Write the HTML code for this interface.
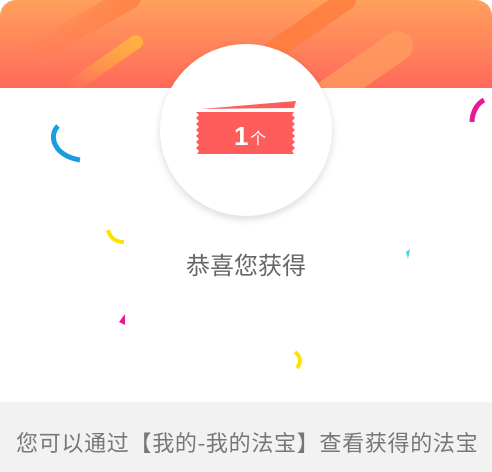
<!DOCTYPE html>
<html><head><meta charset="utf-8"><style>
html,body{margin:0;padding:0;width:492px;height:472px;overflow:hidden;background:#fff;font-family:"Liberation Sans","Noto Sans CJK SC",sans-serif}
.wrap{position:relative;width:492px;height:472px;border-radius:16px 16px 0 0;overflow:hidden;background:#fff}
.hdr{position:absolute;left:0;top:0;width:492px;height:88px;background:linear-gradient(#ffa05c,#ff6a5a);overflow:hidden}
.circle{position:absolute;left:160px;top:44px;width:172px;height:172px;border-radius:50%;background:#fff;box-shadow:0 3px 8px rgba(0,0,0,.15)}
.t1{position:absolute;left:0;top:252px;width:492px;text-align:center;font-size:24px;color:#666;line-height:24px;font-family:"Noto Sans CJK SC",sans-serif}
.foot{position:absolute;left:0;top:402px;width:492px;height:70px;background:#f2f2f2}
.foot span{position:absolute;left:16px;top:28px;font-size:22px;line-height:24px;color:#777;white-space:nowrap;letter-spacing:0.7px;font-family:"Noto Sans CJK SC",sans-serif}
</style></head><body><div class="wrap">
<div class="hdr">
<svg width="492" height="88" style="position:absolute;left:0;top:0">
<defs><linearGradient id="g1" x1="0" y1="0" x2="1" y2="0"><stop offset="0" stop-color="#ff7a4a" stop-opacity=".0"/><stop offset="1" stop-color="#ff7a40" stop-opacity=".7"/></linearGradient>
<linearGradient id="g2" x1="0" y1="1" x2="1" y2="0"><stop offset="0" stop-color="#ffb040" stop-opacity="0"/><stop offset="1" stop-color="#ffb040"/></linearGradient></defs>
<line x1="20" y1="60" x2="130" y2="-2" stroke="url(#g1)" stroke-width="22" stroke-linecap="round"/>
<line x1="70" y1="88" x2="136" y2="42" stroke="url(#g2)" stroke-width="14" stroke-linecap="round"/>
<line x1="260" y1="60" x2="346" y2="0" stroke="#ff7c3c" stroke-opacity=".8" stroke-width="20" stroke-linecap="round"/>
<line x1="320" y1="100" x2="398" y2="46" stroke="#ffa060" stroke-opacity=".7" stroke-width="30" stroke-linecap="round"/>
</svg>
</div>
<div class="circle"></div>
<svg width="492" height="402" style="position:absolute;left:0;top:0">
<polygon points="201,109 296,101 294,108" fill="#ff5c5c"/>
<path d="M197,112 H294 l-2,3 3,3 -3,3 3,3 -3,3 3,3 -3,3 3,3 -3,3 3,3 -3,3 3,3 -3,3 2,3 H197 l2,-3 -3,-3 3,-3 -3,-3 3,-3 -3,-3 3,-3 -3,-3 3,-3 -3,-3 3,-3 -3,-3 3,-3 -3,-3 z" fill="#ff5c5c"/>
<text x="234" y="145" font-family="Liberation Sans" font-weight="bold" font-size="26" fill="#fff">1</text>
<text x="250" y="144" font-family="Noto Sans CJK SC" font-size="16" fill="#fff">个</text>
<path d="M58,126 C48,136 54,156 80,160" stroke="#1a9ee0" stroke-width="5" fill="none"/>
<path d="M484,100 C476,104 472,114 472,122" stroke="#e8189a" stroke-width="5" fill="none"/>
<path d="M108,230 C110,238 116,242 124,242" stroke="#ffe000" stroke-width="4" fill="none"/>
<path d="M406,252 l4,-3 -2,10 z" fill="#3fd4f0"/>
<path d="M125,314 l-6,8 6,3 z" fill="#e8189a"/>
<path d="M295,352 C300,356 302,362 297,368" stroke="#ffe000" stroke-width="4" fill="none"/>
</svg>
<div class="t1">恭喜您获得</div>
<div class="foot"><span>您可以通过【我的-我的法宝】查看获得的法宝</span></div>
</div></body></html>
